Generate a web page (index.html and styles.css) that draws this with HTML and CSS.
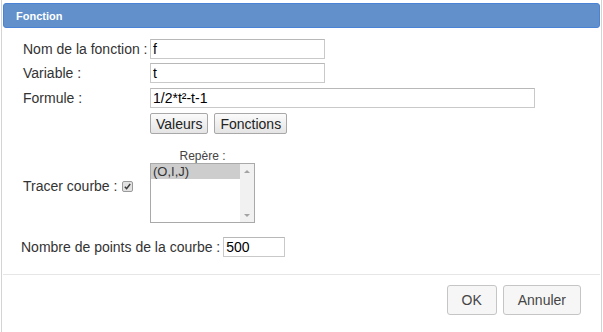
FILE: index.html
```html
<!DOCTYPE html>
<html lang="fr">
<head>
    <meta charset="UTF-8">
    <title>Fonction</title>
    <link rel="stylesheet" href="styles.css">
</head>
<body>
    <div class="dialog">
        <div class="titlebar">
            <span class="title">Fonction</span>
        </div>

        <div class="content">
            <div class="form">
                <label class="label">Nom de la fonction :</label>
                <input class="field short" type="text" value="f">

                <label class="label">Variable :</label>
                <input class="field short" type="text" value="t">

                <label class="label row-formula">Formule :</label>
                <input class="field long row-formula" type="text" value="1/2*t²-t-1">

                <span class="row-tools"></span>
                <div class="tools row-tools">
                    <button class="tool">Valeurs</button>
                    <button class="tool">Fonctions</button>
                </div>

                <div class="label curve-label row-curve">
                    Tracer courbe :
                    <span class="check">
                        <svg width="7" height="7" viewBox="0 0 7 7">
                            <path d="M0.8 3.8 L2.6 5.6 L6.2 1" fill="none" stroke="#3a3a3a" stroke-width="1.5"/>
                        </svg>
                    </span>
                </div>
                <div class="frame-pick row-curve">
                    <div class="pick-title">Repère :</div>
                    <div class="listbox">
                        <div class="options">
                            <div class="option selected">(O,I,J)</div>
                        </div>
                        <div class="scrollbar">
                            <span class="arrow up"></span>
                            <span class="arrow down"></span>
                        </div>
                    </div>
                </div>
            </div>

            <div class="points-row">
                <label class="label">Nombre de points de la courbe :</label>
                <input class="field points" type="text" value="500">
            </div>
        </div>

        <div class="buttonpane">
            <button class="action">OK</button>
            <button class="action">Annuler</button>
        </div>
    </div>
</body>
</html>
```

FILE: styles.css
```css
* {
    margin: 0;
    padding: 0;
    box-sizing: border-box;
    font-family: 'Liberation Sans', Arial, sans-serif;
}

body {
    background-color: #ffffff;
    padding-left: 1px;
}

.dialog {
    width: 601px;
    height: 340px;
    border: 1px solid #d4d4d4;
    border-top: none;
    padding: 3px 1px 0 1px;
    background-color: #ffffff;
}

.titlebar {
    height: 25px;
    background-color: #6190cb;
    border: 1px solid #4a82d6;
    border-radius: 3px;
    padding-left: 12px;
    display: flex;
    align-items: center;
}

.title {
    color: #ffffff;
    font-size: 11px;
    font-weight: bold;
}

.content {
    padding: 11px 20px 17px 20px;
}

.form {
    display: grid;
    grid-template-columns: 127px auto;
    row-gap: 4px;
    align-items: center;
}

.label {
    font-size: 14px;
    color: #333333;
}

.field {
    height: 20px;
    border: 1px solid #c9c9c9;
    border-top-color: #b8b8b8;
    padding: 0 2px;
    font-size: 14px;
    color: #000000;
    outline: none;
}

.short {
    width: 175px;
}

.long {
    width: 385px;
}

.row-formula {
    margin-top: 1px;
}

.tools {
    display: flex;
    gap: 6px;
    margin-top: 1px;
}

.tool {
    height: 21px;
    padding: 0 5px;
    font-size: 14px;
    color: #222222;
    border: 1px solid #a8a8a8;
    border-radius: 2px;
    background: linear-gradient(#fbfbfb, #e4e4e4);
}

.row-curve {
    margin-top: 11px;
}

.curve-label {
    display: flex;
    align-items: center;
    gap: 5px;
}

.check {
    width: 11px;
    height: 11px;
    border: 1px solid #9a9a9a;
    border-radius: 2px;
    background-color: #e2e2e2;
    display: flex;
    align-items: center;
    justify-content: center;
}

.frame-pick {
    width: 105px;
}

.pick-title {
    font-size: 12px;
    line-height: 14px;
    color: #444444;
    text-align: center;
}

.listbox {
    height: 60px;
    border: 1px solid #a9a9a9;
    display: flex;
}

.options {
    flex: 1;
}

.option {
    height: 15px;
    padding-left: 2px;
    font-size: 13px;
    line-height: 15px;
    color: #333333;
}

.selected {
    background-color: #cdcdcd;
}

.scrollbar {
    width: 14px;
    background-color: #f1f1f1;
    display: flex;
    flex-direction: column;
    justify-content: space-between;
    align-items: center;
    padding: 6px 0 5px 0;
}

.arrow {
    width: 0;
    height: 0;
    border-left: 3px solid transparent;
    border-right: 3px solid transparent;
}

.arrow.up {
    border-bottom: 3px solid #a3a3a3;
}

.arrow.down {
    border-top: 3px solid #a3a3a3;
}

.points-row {
    display: flex;
    align-items: center;
    gap: 3px;
    margin-top: 14px;
    margin-left: -2px;
}

.points {
    width: 62px;
}

.buttonpane {
    border-top: 1px solid #e6e6e6;
    padding: 10px 19px 0 0;
    display: flex;
    justify-content: flex-end;
    gap: 6px;
}

.action {
    height: 30px;
    padding: 0 14px;
    font-size: 14px;
    color: #454545;
    background-color: #f6f6f6;
    border: 1px solid #c5c5c5;
    border-radius: 3px;
}
```
